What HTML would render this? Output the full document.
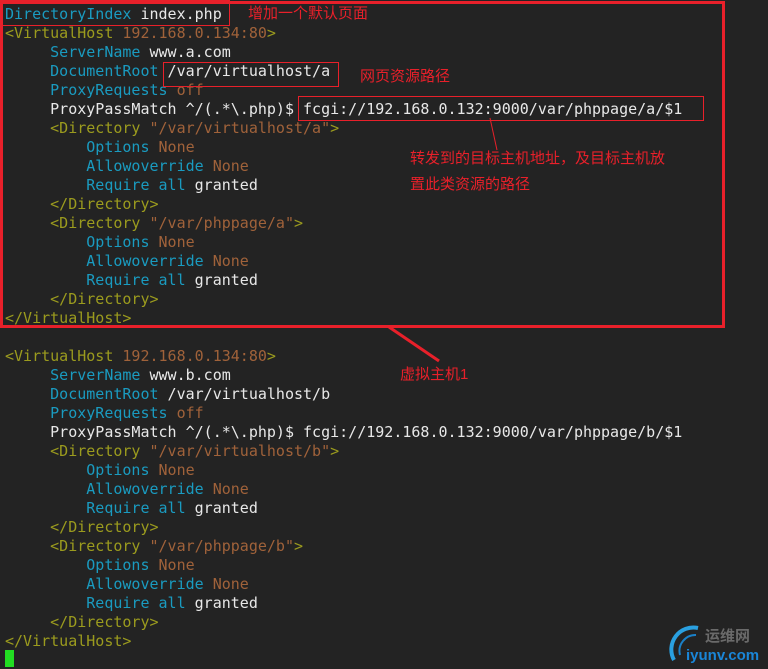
<!DOCTYPE html>
<html><head><meta charset="utf-8"><style>
html,body{margin:0;padding:0;background:#232323;width:768px;height:669px;overflow:hidden;position:relative}
pre{position:absolute;left:5px;top:5px;margin:0;font-family:"DejaVu Sans Mono","Liberation Mono",monospace;font-size:15px;line-height:19px;color:#e8e8e8}
.k{color:#1a9bc0}.t{color:#9b9b1e}.v{color:#a0623a}
.box{position:absolute;border:2px solid #e8202a;box-sizing:border-box}
.ann{position:absolute;color:#e8202a;font-family:"Liberation Sans","Noto Sans CJK SC",sans-serif;font-size:15px;line-height:17px;white-space:nowrap}
.cur{position:absolute;left:5px;top:650px;width:9px;height:17px;background:#22dd22}
</style></head><body>
<pre><span class="k">DirectoryIndex</span> index.php
<span class="t">&lt;VirtualHost</span> <span class="v">192.168.0.134:80</span><span class="t">&gt;</span>
     <span class="k">ServerName</span> www.a.com
     <span class="k">DocumentRoot</span> /var/virtualhost/a
     <span class="k">ProxyRequests</span> <span class="v">off</span>
     ProxyPassMatch ^/(.*\.php)$ fcgi://192.168.0.132:9000/var/phppage/a/$1
     <span class="t">&lt;Directory</span> <span class="v">"/var/virtualhost/a"</span><span class="t">&gt;</span>
         <span class="k">Options</span> <span class="v">None</span>
         <span class="k">Allowoverride</span> <span class="v">None</span>
         <span class="k">Require</span> <span class="k">all</span> granted
     <span class="t">&lt;/Directory&gt;</span>
     <span class="t">&lt;Directory</span> <span class="v">"/var/phppage/a"</span><span class="t">&gt;</span>
         <span class="k">Options</span> <span class="v">None</span>
         <span class="k">Allowoverride</span> <span class="v">None</span>
         <span class="k">Require</span> <span class="k">all</span> granted
     <span class="t">&lt;/Directory&gt;</span>
<span class="t">&lt;/VirtualHost&gt;</span>

<span class="t">&lt;VirtualHost</span> <span class="v">192.168.0.134:80</span><span class="t">&gt;</span>
     <span class="k">ServerName</span> www.b.com
     <span class="k">DocumentRoot</span> /var/virtualhost/b
     <span class="k">ProxyRequests</span> <span class="v">off</span>
     ProxyPassMatch ^/(.*\.php)$ fcgi://192.168.0.132:9000/var/phppage/b/$1
     <span class="t">&lt;Directory</span> <span class="v">"/var/virtualhost/b"</span><span class="t">&gt;</span>
         <span class="k">Options</span> <span class="v">None</span>
         <span class="k">Allowoverride</span> <span class="v">None</span>
         <span class="k">Require</span> <span class="k">all</span> granted
     <span class="t">&lt;/Directory&gt;</span>
     <span class="t">&lt;Directory</span> <span class="v">"/var/phppage/b"</span><span class="t">&gt;</span>
         <span class="k">Options</span> <span class="v">None</span>
         <span class="k">Allowoverride</span> <span class="v">None</span>
         <span class="k">Require</span> <span class="k">all</span> granted
     <span class="t">&lt;/Directory&gt;</span>
<span class="t">&lt;/VirtualHost&gt;</span></pre>
<div class="cur"></div>
<div class="box" style="left:0;top:1px;width:725px;height:327px;border-width:3px"></div>
<div class="box" style="left:0;top:0;width:230px;height:26px;border-width:1px"></div>
<div class="box" style="left:163px;top:62px;width:176px;height:25px;border-width:1px"></div>
<div class="box" style="left:298px;top:96px;width:406px;height:25px;border-width:1px"></div>
<div class="ann" style="left:248px;top:5px">增加一个默认页面</div>
<div class="ann" style="left:360px;top:68px">网页资源路径</div>
<div class="ann" style="left:410px;top:150px">转发到的目标主机地址，及目标主机放</div>
<div class="ann" style="left:410px;top:176px">置此类资源的路径</div>
<div class="ann" style="left:400px;top:366px">虚拟主机1</div>
<svg style="position:absolute;left:0;top:0" width="768" height="669">
<line x1="490" y1="118" x2="497" y2="150" stroke="#e8202a" stroke-width="1"/>
<line x1="389" y1="327" x2="439" y2="361" stroke="#e8202a" stroke-width="3"/>
<path d="M674 660 A22 22 0 0 1 698 628" fill="none" stroke="#2aa0e0" stroke-width="4"/>
<path d="M680 655 A16 16 0 0 1 696 635" fill="none" stroke="#1a80c8" stroke-width="2"/>
</svg>
<div style="position:absolute;left:705px;top:627px;color:#6a6a6a;font:bold 15px 'Noto Sans CJK SC',sans-serif;line-height:18px">运维网</div>
<div style="position:absolute;left:686px;top:647px;color:#1a86d8;font:bold 15px 'Liberation Sans',sans-serif;line-height:18px">iyunv.com</div>
</body></html>
